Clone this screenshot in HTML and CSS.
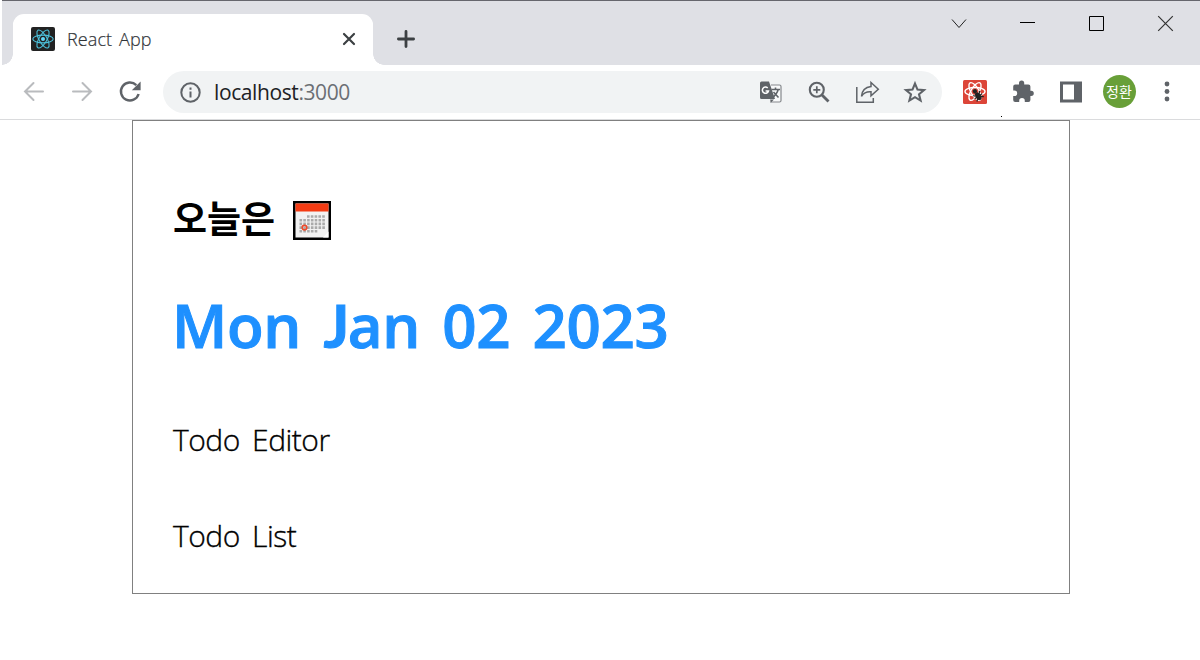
FILE: index.html
```html
<!DOCTYPE html>
<html lang="ko">
<head>
<meta charset="utf-8">
<title>React App</title>
<link rel="stylesheet" href="styles.css">
</head>
<body>
<header class="tabstrip">
  <div class="tab">
    <svg class="favicon" width="24" height="24" viewBox="0 0 24 24" fill="none" stroke="#4cc0da" stroke-width="1.1"><rect width="24" height="24" rx="2" fill="#222" stroke="none"/><ellipse cx="12" cy="12" rx="10.2" ry="3.9"/><ellipse cx="12" cy="12" rx="10.2" ry="3.9" transform="rotate(60 12 12)"/><ellipse cx="12" cy="12" rx="10.2" ry="3.9" transform="rotate(120 12 12)"/><circle cx="12" cy="12" r="2" fill="#61dafb" stroke="none"/></svg>
    <span class="tab-title">React App</span>
    <svg class="tab-close" width="14" height="14" viewBox="0 0 14 14" stroke="#3c4043" stroke-width="2.2" stroke-linecap="round"><path d="M2 2l10 10M12 2L2 12"/></svg>
  </div>
  <svg class="new-tab" width="20" height="20" viewBox="0 0 20 20" stroke="#3c4043" stroke-width="2.8" stroke-linecap="round"><path d="M10 2.4v15.2M2.4 10h15.2"/></svg>
  <div class="window-controls">
    <svg width="17" height="17" viewBox="0 0 17 17" fill="none" stroke="#222" stroke-width="1"><path d="M2 4.500l7 8 7-8"/></svg>
    <svg width="17" height="17" viewBox="0 0 17 17" stroke="#000" stroke-width="1"><path d="M1 7.500h15"/></svg>
    <svg width="17" height="17" viewBox="0 0 17 17" fill="none" stroke="#000"><path d="M1.500 1.500h14v14h-14z"/></svg>
    <svg width="17" height="17" viewBox="0 0 17 17" stroke="#333" stroke-width="1.2"><path d="M1.200 1.200l14.600 14.600M15.800 1.200L1.200 15.800"/></svg>
  </div>
</header>
<nav class="toolbar">
  <span class="cell"><svg width="24" height="24" viewBox="0 0 24 24" fill="none" stroke="#b9bbbe" stroke-width="2" stroke-linecap="round"><path d="M3 11.500h18M11.500 3L3 11.500l8.500 8.500"/></svg></span>
  <span class="cell"><svg width="24" height="24" viewBox="0 0 24 24" fill="none" stroke="#b9bbbe" stroke-width="2" stroke-linecap="round"><path d="M3 11.500h18M12.500 3L21 11.500 12.500 20"/></svg></span>
  <span class="cell"><svg width="24" height="24" viewBox="0 0 24 24"><path d="M18.300 5.100A9 9 0 1 0 20.600 14" fill="none" stroke="#5f6368" stroke-width="2.400"/><path d="M22.600 1.500v8.800h-8.800z" fill="#5f6368"/></svg></span>
  <div class="omnibox">
    <svg class="info" width="22" height="22" viewBox="0 0 22 22" fill="none" stroke="#5f6368" stroke-width="2"><circle cx="11.500" cy="11.500" r="9.200"/><path d="M11.500 10.500v6M11.500 6.500v2.200"/></svg>
    <span class="url">localhost<span class="port">:3000</span></span>
    <span class="cell"><svg width="24" height="24" viewBox="0 0 24 24"><path d="M12 5h8.500a1.500 1.500 0 0 1 1.500 1.500v14a1.500 1.500 0 0 1-1.500 1.500H11" fill="#f8f9fa" stroke="#85888c" stroke-width="1.200"/><path d="M12.500 9.500h8.500M16.500 7.500v2M19 10c-1 4-3.500 6-6 8M14.500 12l5 5.500" fill="none" stroke="#5f6368" stroke-width="1.600"/><path d="M2.500 1.500h7.500l6 17.500H2.500a1.500 1.500 0 0 1-1.500-1.500V3a1.500 1.500 0 0 1 1.500-1.500z" fill="#5f6368"/><path d="M11 19.500h4l-3 3z" fill="#5f6368"/><path d="M8.700 8a3.100 3.100 0 1 0 .8 3H6.600" fill="none" stroke="#fff" stroke-width="1.500"/></svg></span>
    <span class="cell"><svg width="24" height="24" viewBox="0 0 24 24" fill="none" stroke="#5f6368"><circle cx="9.800" cy="9.800" r="7" stroke-width="2.100"/><path d="M15 15l6.500 6.500" stroke-width="2.800"/><path d="M9.800 6.300v7M6.300 9.800h7" stroke-width="1.700"/></svg></span>
    <span class="cell"><svg width="26" height="24" viewBox="0 0 26 24" fill="none" stroke="#5f6368" stroke-width="1.500"><path d="M2.800 7v15.200h16.500V18"/><path d="M17 2.500l7.300 6.700-7.300 6.600v-4c-4.500-.3-7.500 1.300-9.500 4.500.5-5.500 4-9 9.500-9.700z"/></svg></span>
    <span class="cell"><svg width="24" height="24" viewBox="0 0 24 24" fill="none" stroke="#5f6368" stroke-width="2.100"><path d="M12 3.600l2.500 6 6.500.5-5 4.200 1.600 6.300-5.600-3.400-5.600 3.400L8 14.300l-5-4.200 6.500-.5z"/></svg></span>
  </div>
  <span class="cell"><svg width="24" height="24" viewBox="0 0 24 24" fill="none" stroke="#fff" stroke-width="1.400"><rect width="24" height="24" rx="1.500" fill="#dc4538" stroke="none"/><ellipse cx="12" cy="11.500" rx="10" ry="4"/><ellipse cx="12" cy="11.500" rx="10" ry="4" transform="rotate(60 12 11.500)"/><ellipse cx="12" cy="11.500" rx="10" ry="4" transform="rotate(120 12 11.500)"/><g transform="rotate(-35 14.500 15)"><ellipse cx="14.500" cy="16.500" rx="2.500" ry="4.300" fill="#222" stroke="none"/><circle cx="14.500" cy="10.500" r="2.100" fill="#222" stroke="none"/><path d="M10.300 13l8.400 7M18.700 13l-8.400 7M10 16.500h9" stroke="#222" stroke-width="1.200"/></g></svg></span>
  <span class="cell"><svg width="24" height="24" viewBox="0 0 24 24" fill="#5f6368"><path transform="translate(.7 -.5)" d="M19 11.200h-.3V7a2 2 0 0 0-2-2h-4.200V3.600a2.600 2.600 0 0 0-5.200 0V5H3.500a2 2 0 0 0-2 2v4h1.200a2.800 2.800 0 0 1 0 5.600H1.500v4a2 2 0 0 0 2 2h4v-1.200a2.800 2.800 0 0 1 5.600 0v1.200h3.600a2 2 0 0 0 2-2v-4.200h.8a2.600 2.600 0 0 0 0-5.200z"/></svg></span>
  <span class="cell"><svg width="22" height="22" viewBox="0 0 22 22"><path d="M0 .500h22v21H0z" fill="#5f6368"/><path d="M3 3.500h11v15H3z" fill="#fff"/></svg></span>
  <span class="cell"><span class="avatar">정환</span></span>
  <span class="cell"><svg width="6" height="22" viewBox="0 0 6 22" fill="#5f6368"><circle cx="3" cy="3" r="2.400"/><circle cx="3" cy="10.500" r="2.400"/><circle cx="3" cy="18" r="2.400"/></svg></span>
  <i class="speck"></i>
</nav>
<main class="app">
  <h3 class="today"><span class="today-text">오늘은</span>
    <svg width="38" height="39" viewBox="0 0 38 39"><path d="M0 0h38v39H0z" fill="#000"/><path d="M2.500 2.500h33v34h-33z" fill="#f2f2f2"/><path d="M2.500 2.500h33v8h-33z" fill="#f43b13"/><path d="M14 15.500h18M6.500 19.200h25.500M6.500 22.900h25.500M6.500 26.600h25.500M6.500 30.300h18" stroke="#aaa" stroke-width="2.600" stroke-dasharray="2.600 1.200"/><circle cx="11.500" cy="26.600" r="2.300" fill="none" stroke="#f04a2a" stroke-width="1.600"/><path d="M30 36.500l5.500-6v6z" fill="#fff"/></svg>
  </h3>
  <h1 class="date">Mon <span class="short-j">J</span>an 02 2023</h1>
  <div class="item">Todo Editor</div>
  <div class="item list">Todo List</div>
</main>
</body>
</html>
```

FILE: styles.css
```css
* { box-sizing: border-box; }
body { margin: 0; width: 1200px; height: 660px; overflow: hidden; background: #fff; font-family: "Open Sans", "Noto Sans", "Noto Sans CJK KR", sans-serif; }
svg { display: block; flex: none; }
.tabstrip { display: flex; align-items: flex-start; height: 65px; margin-left: 2px; border-top: 1px solid #66666d; background: #dfe0e5; }
.tab { position: relative; display: flex; align-items: center; width: 360px; height: 50px; margin: 13px 0 0 11px; padding: 0 17px 0 18px; background: #fff; border-radius: 11px 11px 0 0; box-shadow: 0 1px #fff; }
.tab::before, .tab::after { content: ""; position: absolute; bottom: -1px; width: 11px; height: 11px; }
.tab::before { left: -11px; background: radial-gradient(circle at 0 0, transparent 10.5px, #fff 11px); }
.tab::after { right: -11px; background: radial-gradient(circle at 100% 0, transparent 10.5px, #fff 11px); }
.tab-title { margin: 0 auto 0 12px; color: #303438; font-size: 18px; font-weight: 300; line-height: 24px; letter-spacing: .1px; word-spacing: 2px; -webkit-text-stroke: .2px; }
.new-tab { margin: 28px 0 0 23px; }
.window-controls { display: grid; grid-template-columns: repeat(4, 69px); justify-items: center; margin: 14px 0 0 auto; }
.toolbar { position: relative; display: flex; align-items: center; height: 55px; padding: 0 9px 1px 10px; border-bottom: 1px solid #dadbdd; }
.cell { display: flex; align-items: center; justify-content: center; flex: none; width: 48px; }
.omnibox { display: flex; align-items: center; width: 779px; height: 42px; margin: 0 9px; padding: 0 3px 0 16px; border-radius: 21px; background: #f1f3f4; }
.url { margin: 0 auto 0 13px; color: #202124; font-size: 21px; line-height: 28px; letter-spacing: -.4px; }
.port { color: #6b6f74; }
.avatar { width: 33px; height: 33px; border-radius: 50%; background: #689f38; color: #fff; font: 14px/32px "Noto Sans CJK KR", sans-serif; text-align: center; }
.speck { position: absolute; left: 1001px; top: 51px; width: 1px; height: 1px; background: #000; }
.app { width: 938px; height: 474px; margin-left: 132px; padding: 72px 40px 0; border: 1px solid #808080; color: #000; }
.today { display: flex; align-items: center; height: 54px; margin: 0; gap: 18px; font: 700 37px/54px "Noto Sans CJK KR", sans-serif; }
.today-text { padding-bottom: 7px; }
.date { margin: 39px 0 0 -1px; color: #1e90ff; font-size: 60px; font-weight: 600; line-height: 78px; letter-spacing: -.3px; word-spacing: 7px; white-space: nowrap; -webkit-text-stroke: 1px; }
.short-j { font-family: Lato, sans-serif; font-weight: 700; letter-spacing: -1.5px; }
.item { margin-top: 56px; font-size: 30px; font-weight: 300; line-height: 40px; letter-spacing: -.5px; word-spacing: 5px; -webkit-text-stroke: .35px; }
.list { margin-top: 56px; }
```
